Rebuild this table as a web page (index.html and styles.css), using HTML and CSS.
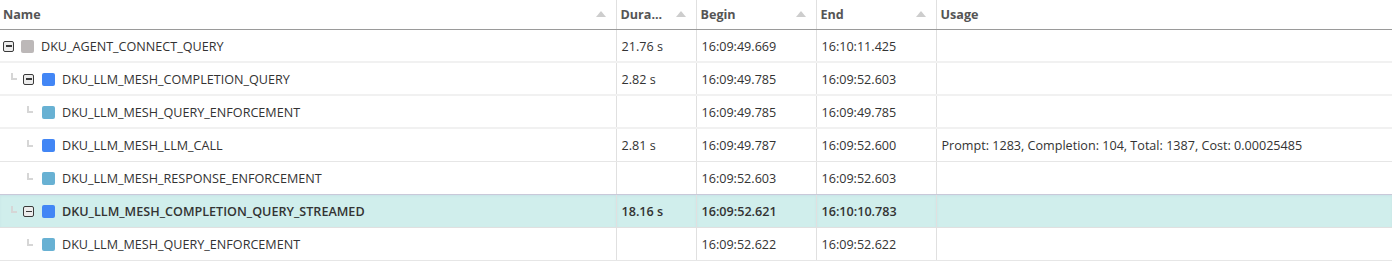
FILE: index.html
```html
<!DOCTYPE html>
<html>
<head>
<meta charset="utf-8">
<link rel="stylesheet" href="styles.css">
</head>
<body>
<table class="grid">
  <colgroup>
    <col class="c-name"><col class="c-dur"><col class="c-begin"><col class="c-end"><col class="c-usage">
  </colgroup>
  <thead>
    <tr>
      <th><div class="hcell"><span>Name</span><span class="sort"></span></div></th>
      <th><div class="hcell"><span>Dura...</span><span class="sort"></span></div></th>
      <th><div class="hcell"><span>Begin</span><span class="sort"></span></div></th>
      <th><div class="hcell"><span>End</span><span class="sort"></span></div></th>
      <th class="last"><div class="hcell"><span>Usage</span></div></th>
    </tr>
  </thead>
  <tbody>
    <tr class="r-a">
      <td><div class="name lvl0"><span class="exp"></span><span class="sq gray"></span><span>DKU_AGENT_CONNECT_QUERY</span></div></td>
      <td>21.76 s</td><td>16:09:49.669</td><td>16:10:11.425</td><td class="last"></td>
    </tr>
    <tr class="r-a">
      <td><div class="name lvl1"><span class="conn"></span><span class="exp"></span><span class="sq blue"></span><span>DKU_LLM_MESH_COMPLETION_QUERY</span></div></td>
      <td>2.82 s</td><td>16:09:49.785</td><td>16:09:52.603</td><td class="last"></td>
    </tr>
    <tr class="r-a">
      <td><div class="name lvl2"><span class="conn"></span><span class="sq light"></span><span>DKU_LLM_MESH_QUERY_ENFORCEMENT</span></div></td>
      <td></td><td>16:09:49.785</td><td>16:09:49.785</td><td class="last"></td>
    </tr>
    <tr class="r-b">
      <td><div class="name lvl2"><span class="conn"></span><span class="sq blue"></span><span>DKU_LLM_MESH_LLM_CALL</span></div></td>
      <td>2.81 s</td><td>16:09:49.787</td><td>16:09:52.600</td><td class="last">Prompt: 1283, Completion: 104, Total: 1387, Cost: 0.00025485</td>
    </tr>
    <tr class="r-b pre-sel">
      <td><div class="name lvl2"><span class="conn"></span><span class="sq light"></span><span>DKU_LLM_MESH_RESPONSE_ENFORCEMENT</span></div></td>
      <td></td><td>16:09:52.603</td><td>16:09:52.603</td><td class="last"></td>
    </tr>
    <tr class="r-b sel">
      <td><div class="name lvl1"><span class="conn"></span><span class="exp"></span><span class="sq blue"></span><span>DKU_LLM_MESH_COMPLETION_QUERY_STREAMED</span></div></td>
      <td>18.16 s</td><td>16:09:52.621</td><td>16:10:10.783</td><td class="last"></td>
    </tr>
    <tr class="r-b">
      <td><div class="name lvl2"><span class="conn"></span><span class="sq light"></span><span>DKU_LLM_MESH_QUERY_ENFORCEMENT</span></div></td>
      <td></td><td>16:09:52.622</td><td>16:09:52.622</td><td class="last"></td>
    </tr>
  </tbody>
</table>
</body>
</html>
```
FILE: styles.css
```css
html, body {
  margin: 0;
  padding: 0;
  background: #fff;
}
body {
  font-family: "Open Sans", "Liberation Sans", sans-serif;
  font-size: 12.6px;
  color: #333;
  overflow: hidden;
}
.grid {
  border-collapse: collapse;
  table-layout: fixed;
  width: 1392px;
}
.c-name { width: 616px; }
.c-dur { width: 80px; }
.c-begin { width: 120px; }
.c-end { width: 120px; }
th {
  height: 29px;
  padding: 0 10px 0 4px;
  text-align: left;
  font-weight: 700;
  color: #555;
  border-right: 1px solid #e0e0e0;
  border-bottom: 1px solid #9a9a9a;
  box-sizing: border-box;
}
th:first-child { padding-left: 3px; }
.hcell {
  display: flex;
  align-items: center;
  justify-content: space-between;
}
.sort {
  width: 0;
  height: 0;
  border-left: 5px solid transparent;
  border-right: 5px solid transparent;
  border-bottom: 6px solid #cdcdcd;
}
td {
  height: 30px;
  padding: 2px 5px 0;
  border-right: 1px solid #e0e0e0;
  border-bottom: 1px solid #e6e6e6;
  white-space: nowrap;
  overflow: hidden;
}
tbody td:first-child { padding: 2px 0 0; }
.last { border-right: none; }
.r-a td { border-bottom: 2px solid #f1f1f1; height: 29px; }
.pre-sel td { border-bottom: 1px solid #c9c9d9; }
.sel td {
  background: #d0eeec;
  font-weight: 600;
  border-bottom-color: #e0e0e0;
  box-shadow: inset 0 1px 2px rgba(120,120,180,0.08);
}
.name {
  display: flex;
  align-items: center;
  position: relative;
}
.lvl0 { padding-left: 3px; }
.lvl1 { padding-left: 11px; }
.lvl2 { padding-left: 27px; }
.conn {
  width: 6px;
  height: 7px;
  border-left: 2px solid #d6d6d6;
  border-bottom: 2px solid #d6d6d6;
  box-sizing: border-box;
  margin-top: -5px;
}
.lvl1 .conn { margin-right: 6px; }
.lvl2 .conn { margin-right: 9px; }
.exp {
  width: 11px;
  height: 11px;
  box-sizing: border-box;
  border: 1.5px solid #3a3a3a;
  border-radius: 2px;
  background: #ececec;
  position: relative;
  margin-right: 7px;
}
.exp::after {
  content: "";
  position: absolute;
  left: 1.5px;
  right: 1.5px;
  top: 3.5px;
  height: 1.5px;
  background: #3a3a3a;
}
.lvl1 .exp { margin-right: 8px; }
.sq {
  width: 13px;
  height: 13px;
  border-radius: 2px;
  margin-right: 7px;
  flex: none;
}
.gray { background: #bcb8b8; }
.blue { background: #4286f5; }
.light { background: #68b1d3; }
```
